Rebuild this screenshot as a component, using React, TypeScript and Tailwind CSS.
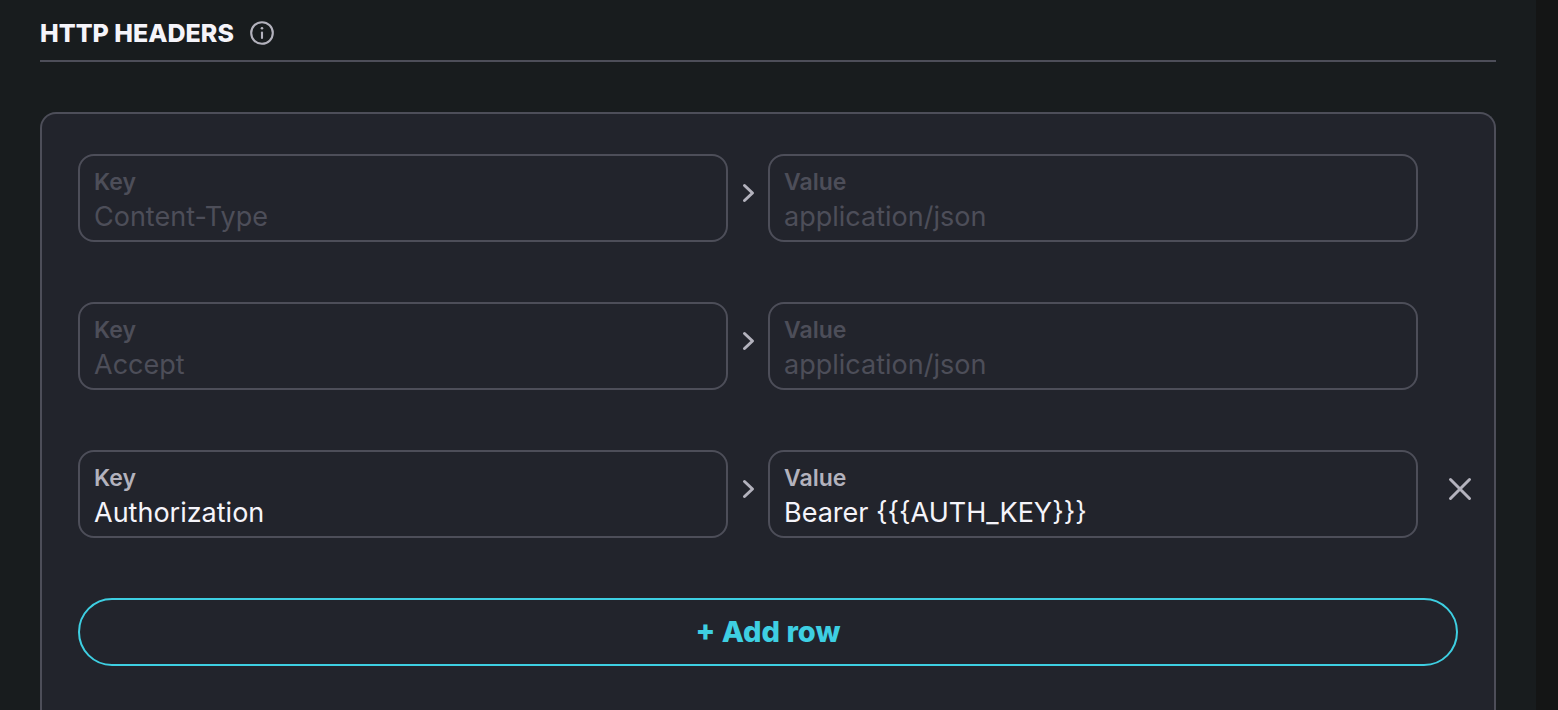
import { useState } from "react";

type Header = { id: number; key: string; value: string; locked?: boolean };

const initialHeaders: Header[] = [
  { id: 1, key: "Content-Type", value: "application/json", locked: true },
  { id: 2, key: "Accept", value: "application/json", locked: true },
  { id: 3, key: "Authorization", value: "Bearer {{{AUTH_KEY}}}" },
];

type FieldProps = {
  id: string;
  label: string;
  value: string;
  disabled?: boolean;
  onChange: (value: string) => void;
};

function Field({ id, label, value, disabled, onChange }: FieldProps) {
  return (
    <div className="flex h-[88px] min-w-0 flex-col rounded-2xl border-2 border-[#4d4e59] px-3.5 pt-2.5">
      <label
        htmlFor={id}
        className={`text-[23px] leading-8 font-semibold ${disabled ? "text-[#4d4e59]" : "text-[#b3b2bd]"}`}
      >
        {label}
      </label>
      <input
        id={id}
        type="text"
        value={value}
        disabled={disabled}
        onChange={(e) => onChange(e.target.value)}
        className="h-[38px] w-full bg-transparent text-[27px] text-[#f5f4fa] outline-none disabled:text-[#4d4e59]"
      />
    </div>
  );
}

function ChevronIcon() {
  return (
    <svg width="24" height="24" viewBox="0 0 24 24" fill="none" stroke="#b3b2bd" strokeWidth="3" strokeLinecap="round" strokeLinejoin="round" aria-hidden="true">
      <path d="M8.5 4.5 16.5 12l-8 7.5" />
    </svg>
  );
}

function CloseIcon() {
  return (
    <svg width="28" height="28" viewBox="0 0 28 28" fill="none" stroke="#b3b2bd" strokeWidth="3" strokeLinecap="round" aria-hidden="true">
      <path d="m4.5 4.5 19 19m0-19-19 19" />
    </svg>
  );
}

function InfoIcon() {
  return (
    <svg width="24" height="24" viewBox="0 0 24 24" fill="none" stroke="#b3b2bd" strokeWidth="2.1" strokeLinecap="round" aria-hidden="true">
      <circle cx="12" cy="12" r="10.8" />
      <path d="M12 11.5v5.5" />
      <circle cx="12" cy="7.3" r="1.3" fill="#b3b2bd" stroke="none" />
    </svg>
  );
}

export default function App() {
  const [headers, setHeaders] = useState(initialHeaders);

  const update = (id: number, patch: Partial<Header>) =>
    setHeaders((rows) => rows.map((row) => (row.id === id ? { ...row, ...patch } : row)));
  const remove = (id: number) => setHeaders((rows) => rows.filter((row) => row.id !== id));
  const add = () => setHeaders((rows) => [...rows, { id: Date.now(), key: "", value: "" }]);

  return (
    <main className="flex min-h-screen bg-[#141515] font-['Inter','Liberation_Sans',sans-serif]">
      <section className="mr-[22px] flex min-w-0 flex-1 flex-col bg-[#181c1e] px-10">
        <header className="flex h-[62px] items-center gap-4 border-b-2 border-[#4d4e59] pt-1.5">
          <h2 className="text-[25px] leading-8 font-extrabold text-[#f5f4fa]">HTTP HEADERS</h2>
          <button type="button" aria-label="About HTTP headers">
            <InfoIcon />
          </button>
        </header>

        <div className="mt-[50px] flex flex-1 flex-col gap-[60px] rounded-t-2xl border-2 border-b-0 border-[#4d4e59] bg-[#22242c] pt-10 pr-5 pb-11 pl-9">
          {headers.map((row) => (
            <div key={row.id} className="grid grid-cols-[1fr_40px_1fr_56px] items-center">
              <Field
                id={`key-${row.id}`}
                label="Key"
                value={row.key}
                disabled={row.locked}
                onChange={(key) => update(row.id, { key })}
              />
              <div className="flex justify-center pb-2.5">
                <ChevronIcon />
              </div>
              <Field
                id={`value-${row.id}`}
                label="Value"
                value={row.value}
                disabled={row.locked}
                onChange={(value) => update(row.id, { value })}
              />
              {!row.locked && (
                <button type="button" aria-label="Remove row" onClick={() => remove(row.id)} className="flex justify-end pb-2.5">
                  <CloseIcon />
                </button>
              )}
            </div>
          ))}
          <button
            type="button"
            onClick={add}
            className="mr-4 h-[68px] rounded-full border-2 border-[#3ecfe2] text-[29px] leading-9 font-extrabold text-[#3ecfe2]"
          >
            + Add row
          </button>
        </div>
      </section>
    </main>
  );
}
